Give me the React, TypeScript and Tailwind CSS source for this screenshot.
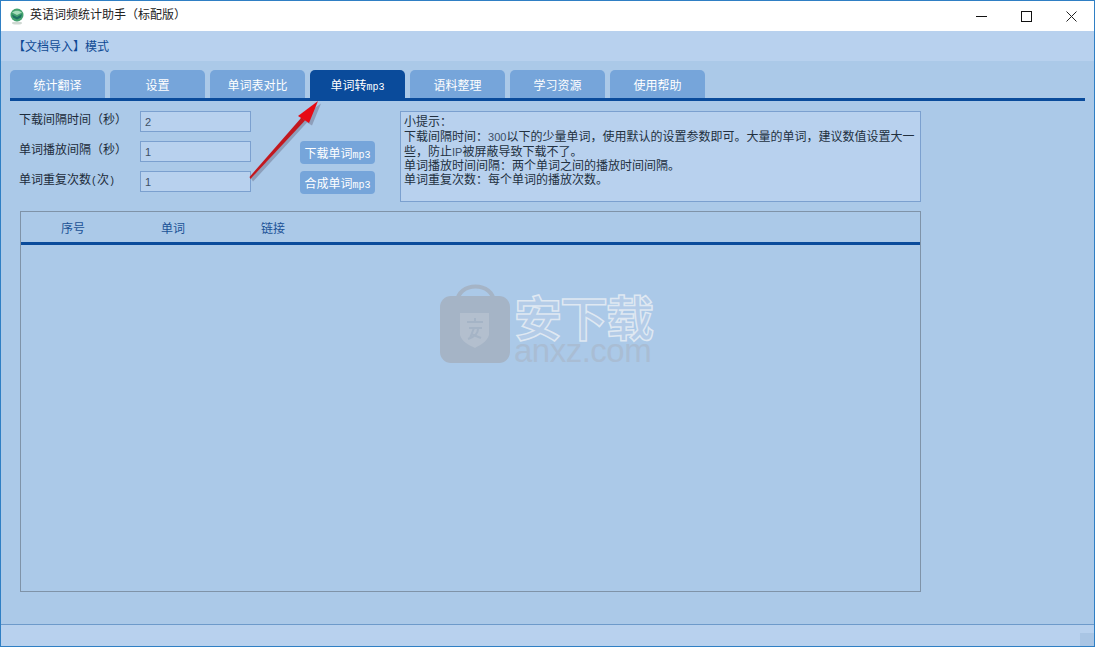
const font = "font-['Liberation_Mono','Noto_Sans_CJK_SC',monospace]";

const tabs = ["统计翻译", "设置", "单词表对比", "单词转mp3", "语料整理", "学习资源", "使用帮助"];

const fields = [
  { label: "下载间隔时间（秒）", value: "2" },
  { label: "单词播放间隔（秒）", value: "1" },
  { label: "单词重复次数(次)", value: "1" },
];

function Mp3Text({ text }: { text: string }) {
  const cjk = text.replace("mp3", "");
  return (
    <span>
      {cjk}
      {text.endsWith("mp3") && <span className="text-[10px]">mp3</span>}
    </span>
  );
}

function Num({ children }: { children: string }) {
  return <span className="text-[11px] text-[#3d4f66] font-['Liberation_Sans',sans-serif]">{children}</span>;
}

function Tab({ label, active }: { label: string; active: boolean }) {
  return (
    <div
      className={`flex h-[28px] w-[95px] items-center justify-center rounded-t-[5px] pt-[5px] text-[12px] text-white ${
        active ? "bg-[#0a4b9b]" : "bg-[#76a5da]"
      }`}
    >
      <Mp3Text text={label} />
    </div>
  );
}

function TitleBar() {
  return (
    <div className="flex h-[30px] items-center bg-white pl-[8px] text-[12px] text-[#222]">
      <svg width="16" height="18" viewBox="0 0 16 18">
        <ellipse cx="8" cy="16" rx="5" ry="1.500" fill="#cfd8d2" />
        <circle cx="8" cy="8" r="6.500" fill="#43a26e" />
        <path d="M3 5.500C6 3 10 3 13 5.500L8 8Z" fill="#a5dcb9" />
        <path d="M3 7.500l5 2.500 5-3-1 3.500-4 2-4-2z" fill="#1d6f63" />
      </svg>
      <span className="ml-[5px]">英语词频统计助手（标配版）</span>
      <div className="ml-auto flex h-full items-center">
        <svg className="mr-[34px]" width="11" height="11" viewBox="0 0 11 11">
          <path d="M0 5.500H11" stroke="#111" strokeWidth="1" />
        </svg>
        <svg className="mr-[34px]" width="11" height="11" viewBox="0 0 11 11">
          <rect x="0.500" y="0.500" width="10" height="10" fill="none" stroke="#111" strokeWidth="1" />
        </svg>
        <svg className="mr-[17px]" width="11" height="11" viewBox="0 0 11 11">
          <path d="M0.500 0.500L10.500 10.500M10.500 0.500L0.500 10.500" stroke="#222" strokeWidth="1" />
        </svg>
      </div>
    </div>
  );
}

function Watermark() {
  return (
    <div className="pointer-events-none absolute left-[438px] top-[282px] flex items-start">
      <svg width="72" height="81" viewBox="0 0 72 81">
        <path d="M18 20C18 -2 55 -2 55 20" fill="none" stroke="#a5b4c6" strokeWidth="4" />
        <rect x="1" y="13" width="70" height="67" rx="11" fill="#a5b4c6" />
        <path d="M21 30H50V52C48 59 41 62 36 65C30 62 23 59 21 52Z" fill="#b3bfce" />
        <path d="M28 39H44M36 35V39M30 45H43M35 45L31 55M39 46C39 51 35 54 29 56M32 51L42 55" fill="none" stroke="#a5b4c6" strokeWidth="2" />
      </svg>
      <div className="ml-[3px] flex flex-col">
        <div className="mt-[7px] text-[48px] leading-[50px] font-bold tracking-[-2px] text-[#b4cce8] font-['Noto_Sans_CJK_SC',sans-serif] [-webkit-text-stroke:1.5px_#dfe8f2]">
          安下载
        </div>
        <div className="mt-[-6px] text-[33px] leading-[34px] tracking-[-0.5px] text-[#a9bdd4] font-['Liberation_Sans',sans-serif]">
          anxz.com
        </div>
      </div>
    </div>
  );
}

function RedArrow() {
  return (
    <svg className="pointer-events-none absolute left-[240px] top-[95px]" width="90" height="95" viewBox="0 0 90 95">
      <path d="M10 84L64 25L69 28L78 6L57 21L61 23L8 81Z" fill="#4a3a50" opacity="0.3" transform="translate(2 1.500)" />
      <path d="M9.500 83L64 24.500L60.500 21.500L8.500 81Z" fill="#c2181f" />
      <path d="M77 5L57 20L68 27Z" fill="#e70a14" />
    </svg>
  );
}

export default function App() {
  return (
    <div className={`relative flex h-[647px] w-[1095px] flex-col overflow-hidden border border-[#2f7fc4] bg-[#abc9e8] ${font}`}>
      <TitleBar />

      <div className="flex h-[30px] items-center bg-[#b8d1ee] pl-[12px] pt-[4px] text-[12px] text-[#0f4a94]">
        【文档导入】模式
      </div>

      <div className="mt-[9px] px-[9px]">
        <div className="flex gap-[5px] border-b-[3px] border-[#0a4b9b]">
          {tabs.map((tab, i) => (
            <Tab key={tab} label={tab} active={i === 3} />
          ))}
        </div>
      </div>

      <div className="flex flex-1 flex-col pl-[19px] pt-[10px]">
        <div className="flex h-[91px]">
          <div className="flex w-[231px] flex-col gap-[9px]">
            {fields.map((f) => (
              <div key={f.label} className="flex h-[21px] items-center">
                <span className="-ml-[1px] mr-[1px] w-[120px] pb-[2px] text-[12px] text-[#1c2b3a]">
                  {f.label.replace(/\(次\)/, "")}
                  {f.label.includes("(次)") && (
                    <>
                      <span className="text-[10px]">(</span>次<span className="text-[10px]">)</span>
                    </>
                  )}
                </span>
                <div className="flex h-[21px] w-[111px] items-center border border-[#7ba0cf] bg-[#b8d1ee] pl-[4px] pt-[1px]">
                  <Num>{f.value}</Num>
                </div>
              </div>
            ))}
          </div>

          <div className="ml-[49px] flex w-[75px] flex-col gap-[7px] pt-[30px]">
            {["下载单词mp3", "合成单词mp3"].map((b) => (
              <div key={b} className="flex h-[23px] items-center justify-center rounded-[4px] bg-[#76a5da] pt-[4px] text-[12px] text-white">
                <Mp3Text text={b} />
              </div>
            ))}
          </div>

          <div className="ml-[25px] w-[521px] border border-[#7ba0cf] bg-[#b8d1ee] px-[3px] pt-[4px] text-[12px] leading-[14px] text-[#22303f]">
            小提示：
            <br />
            下载间隔时间：<Num>300</Num>以下的少量单词，使用默认的设置参数即可。大量的单词，建议数值设置大一些，防止<Num>IP</Num>被屏蔽导致下载不了。
            <br />
            单词播放时间间隔：两个单词之间的播放时间间隔。
            <br />
            单词重复次数：每个单词的播放次数。
          </div>
        </div>

        <div className="mt-[9px] flex h-[381px] w-[901px] flex-col border border-[#7f93a8]">
          <div className="flex h-[33px] items-center border-b-[3px] border-[#0a4b9b] pl-[40px] pt-[5px] text-[12px] text-[#1b5296]">
            <span className="w-[100px]">序号</span>
            <span className="w-[100px]">单词</span>
            <span>链接</span>
          </div>
        </div>
      </div>

      <div className="relative h-[22px] border-t border-[#6d9aca] bg-[#b8d1ee]">
        <div className="absolute bottom-0 right-0 h-[13px] w-[14px] bg-[#a9c5e4]" />
      </div>

      <Watermark />
      <RedArrow />
    </div>
  );
}
